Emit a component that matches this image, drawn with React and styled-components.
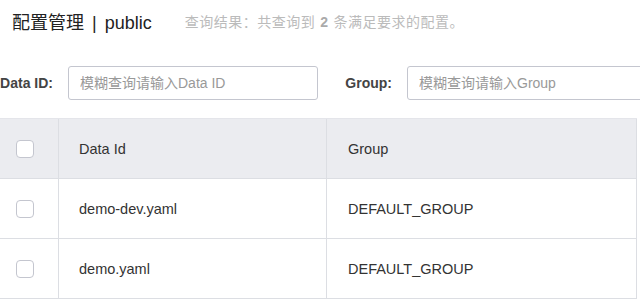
import React from "react";
import styled, { createGlobalStyle } from "styled-components";

const Global = createGlobalStyle`
  html, body { margin: 0; padding: 0; background: #fff; }
  body {
    font-family: "Liberation Sans", Arial, "Noto Sans CJK SC", sans-serif;
    color: #333;
    overflow: hidden;
  }
`;

const Page = styled.div`
  width: 640px;
  height: 306px;
  overflow: hidden;
`;

const TitleBar = styled.div`
  display: flex;
  align-items: center;
  height: 42px;
  padding-left: 12px;
`;

const Title = styled.h1`
  margin: 0;
  font-size: 18px;
  font-weight: normal;
  color: #222;
  white-space: nowrap;
`;

const Divider = styled.span`
  margin: 0 8px;
`;

const Summary = styled.span`
  margin-left: 33px;
  font-size: 14px;
  letter-spacing: 0.5px;
  color: #bbb;
  white-space: nowrap;
`;

const Count = styled.b`
  color: #aaa;
  margin: 0 5px;
`;

const FilterRow = styled.div`
  display: flex;
  align-items: center;
  margin-top: 24px;
  height: 34px;
`;

const Label = styled.label`
  flex-shrink: 0;
  font-size: 14px;
  font-weight: bold;
  color: #444;
  white-space: nowrap;
  text-align: right;
  width: ${(p) => p.$width}px;
  margin-left: ${(p) => p.$offset || 0}px;
  margin-right: ${(p) => p.$gap}px;
`;

const Input = styled.input`
  box-sizing: border-box;
  height: 34px;
  width: ${(p) => p.$width}px;
  flex-shrink: 0;
  border: 1px solid #c4c6cf;
  border-radius: 3px;
  padding: 0 11px;
  font-size: 14px;
  font-family: inherit;
  color: #333;
  outline: none;
  &::placeholder { color: #999; }
`;

const Table = styled.div`
  margin-top: 18px;
  width: 637px;
  border-top: 1px solid #e4e5ea;
`;

const Row = styled.div`
  display: grid;
  grid-template-columns: 59px 268px 310px;
  height: 60px;
  box-sizing: border-box;
  border-bottom: 1px solid #dcdee3;
  background: ${(p) => (p.$head ? "#ebecf0" : "#fff")};
`;

const Cell = styled.div`
  display: flex;
  align-items: center;
  box-sizing: border-box;
  border-right: 1px solid #dcdee3;
  padding-left: ${(p) => p.$pad ?? 20}px;
  font-size: 14.5px;
  color: #333;
  white-space: nowrap;
`;

const Check = styled.span`
  display: inline-block;
  width: 18px;
  height: 18px;
  box-sizing: border-box;
  border: 1px solid #c4c6cf;
  border-radius: 4px;
  background: #fff;
`;

const rows = [
  { id: "demo-dev.yaml", group: "DEFAULT_GROUP" },
  { id: "demo.yaml", group: "DEFAULT_GROUP" },
];

export default function App() {
  return (
    <Page>
      <Global />
      <TitleBar>
        <Title>
          配置管理<Divider>|</Divider>public
        </Title>
        <Summary>
          查询结果：共查询到<Count>2</Count>条满足要求的配置。
        </Summary>
      </TitleBar>
      <FilterRow>
        <Label $width={56} $offset={-3} $gap={15}>Data ID:</Label>
        <Input $width={250} placeholder="模糊查询请输入Data ID" />
        <Label $width={48} $offset={26} $gap={15}>Group:</Label>
        <Input $width={260} placeholder="模糊查询请输入Group" />
      </FilterRow>
      <Table>
        <Row $head>
          <Cell $pad={16}><Check /></Cell>
          <Cell>Data Id</Cell>
          <Cell $pad={21}>Group</Cell>
        </Row>
        {rows.map((r) => (
          <Row key={r.id}>
            <Cell $pad={16}><Check /></Cell>
            <Cell>{r.id}</Cell>
            <Cell $pad={21}>{r.group}</Cell>
          </Row>
        ))}
      </Table>
    </Page>
  );
}
